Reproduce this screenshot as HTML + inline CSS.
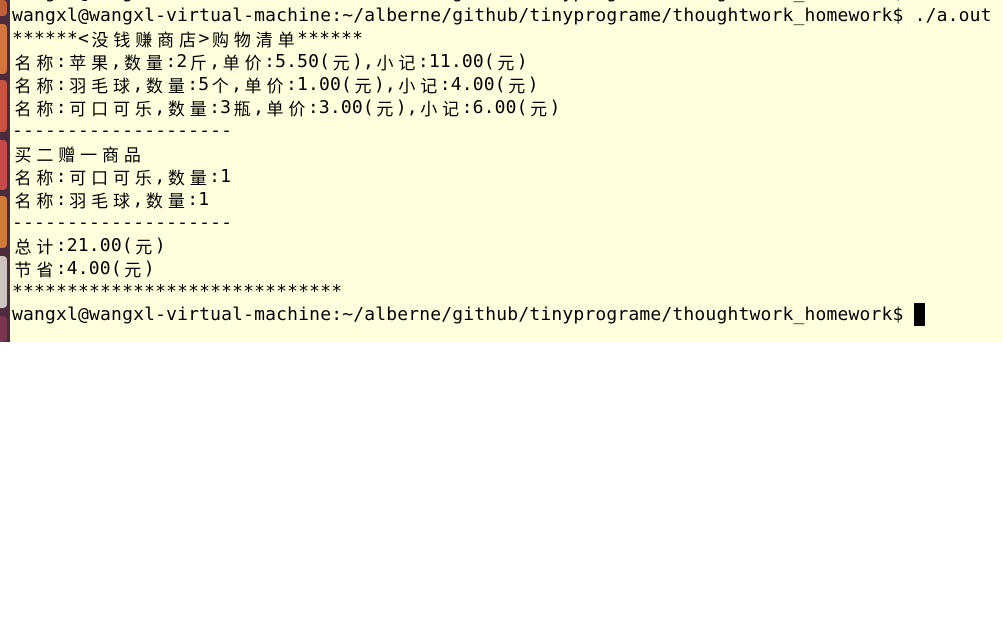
<!DOCTYPE html>
<html><head><meta charset="utf-8">
<style>
html,body{margin:0;padding:0;}
body{width:1003px;height:640px;background:#fff;position:relative;overflow:hidden;}
#term{position:absolute;left:0;top:0;width:1003px;height:342px;background:#ffffdd;}
#bar{position:absolute;left:0;top:0;width:10px;height:342px;background:#4b2b3c;}
.ic{position:absolute;left:0;width:7px;border-radius:0 4px 4px 0;}
#txt{position:absolute;left:12px;top:-19.5px;margin:0;font-family:"DejaVu Sans Mono","Liberation Mono","Noto Sans CJK SC",monospace;font-size:18px;letter-spacing:0.17px;line-height:23px;color:#000;white-space:pre;}
.c{display:inline-block;width:21.9px;text-align:center;letter-spacing:0;font-family:"Noto Sans CJK SC","WenQuanYi Zen Hei",sans-serif;font-size:17px;line-height:23px;vertical-align:top;}
#cur{position:absolute;left:914px;top:303px;width:11px;height:23px;background:#000;}
</style></head><body>
<div id="term"></div>
<div id="bar">
<div class="ic" style="top:0;height:16px;background:#c0603a"></div>
<div class="ic" style="top:24px;height:50px;background:#d3763e"></div>
<div class="ic" style="top:80px;height:52px;background:#c9533f"></div>
<div class="ic" style="top:140px;height:50px;background:#c84a4a"></div>
<div class="ic" style="top:196px;height:52px;background:#d07a38"></div>
<div class="ic" style="top:256px;height:52px;background:#c9c4c0"></div>
<div class="ic" style="top:316px;height:26px;background:#7a3550"></div>
</div>
<pre id="txt">wangxl@wangxl-virtual-machine:~/alberne/github/tinyprograme/thoughtwork_homework$ ./a.out
wangxl@wangxl-virtual-machine:~/alberne/github/tinyprograme/thoughtwork_homework$ ./a.out
******&lt;<span class="c">没</span><span class="c">钱</span><span class="c">赚</span><span class="c">商</span><span class="c">店</span>&gt;<span class="c">购</span><span class="c">物</span><span class="c">清</span><span class="c">单</span>******
<span class="c">名</span><span class="c">称</span>:<span class="c">苹</span><span class="c">果</span>,<span class="c">数</span><span class="c">量</span>:2<span class="c">斤</span>,<span class="c">单</span><span class="c">价</span>:5.50(<span class="c">元</span>),<span class="c">小</span><span class="c">记</span>:11.00(<span class="c">元</span>)
<span class="c">名</span><span class="c">称</span>:<span class="c">羽</span><span class="c">毛</span><span class="c">球</span>,<span class="c">数</span><span class="c">量</span>:5<span class="c">个</span>,<span class="c">单</span><span class="c">价</span>:1.00(<span class="c">元</span>),<span class="c">小</span><span class="c">记</span>:4.00(<span class="c">元</span>)
<span class="c">名</span><span class="c">称</span>:<span class="c">可</span><span class="c">口</span><span class="c">可</span><span class="c">乐</span>,<span class="c">数</span><span class="c">量</span>:3<span class="c">瓶</span>,<span class="c">单</span><span class="c">价</span>:3.00(<span class="c">元</span>),<span class="c">小</span><span class="c">记</span>:6.00(<span class="c">元</span>)
--------------------
<span class="c">买</span><span class="c">二</span><span class="c">赠</span><span class="c">一</span><span class="c">商</span><span class="c">品</span>
<span class="c">名</span><span class="c">称</span>:<span class="c">可</span><span class="c">口</span><span class="c">可</span><span class="c">乐</span>,<span class="c">数</span><span class="c">量</span>:1
<span class="c">名</span><span class="c">称</span>:<span class="c">羽</span><span class="c">毛</span><span class="c">球</span>,<span class="c">数</span><span class="c">量</span>:1
--------------------
<span class="c">总</span><span class="c">计</span>:21.00(<span class="c">元</span>)
<span class="c">节</span><span class="c">省</span>:4.00(<span class="c">元</span>)
******************************
wangxl@wangxl-virtual-machine:~/alberne/github/tinyprograme/thoughtwork_homework$ </pre>
<div id="cur"></div>
</body></html>
